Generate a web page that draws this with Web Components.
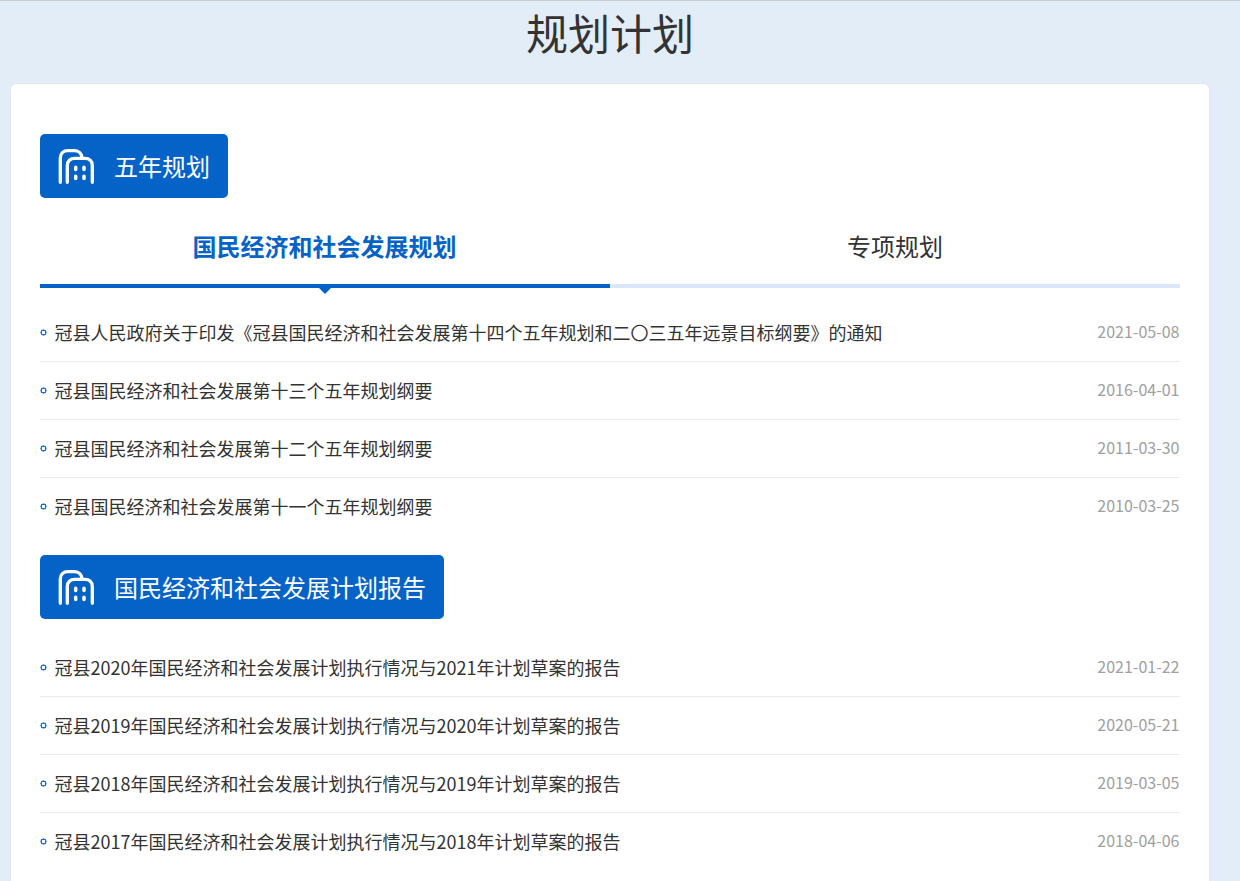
<!DOCTYPE html>
<html lang="zh">
<head>
<meta charset="utf-8">
<title>规划计划</title>
<style>
  html, body { margin: 0; padding: 0; }
  body {
    background: #e3edf8;
    border-top: 1px solid #c9ccd0;
    font-family: "Noto Sans CJK SC", "Noto Sans", sans-serif;
    color: #333;
    height: 880px;
    overflow: hidden;
  }
</style>
</head>
<body>
<plan-page>
  <plan-section title="五年规划">
    <plan-tabs first="国民经济和社会发展规划" second="专项规划"></plan-tabs>
    <plan-row date="2021-05-08">冠县人民政府关于印发《冠县国民经济和社会发展第十四个五年规划和二〇三五年远景目标纲要》的通知</plan-row>
    <plan-row date="2016-04-01">冠县国民经济和社会发展第十三个五年规划纲要</plan-row>
    <plan-row date="2011-03-30">冠县国民经济和社会发展第十二个五年规划纲要</plan-row>
    <plan-row date="2010-03-25" last>冠县国民经济和社会发展第十一个五年规划纲要</plan-row>
  </plan-section>
  <plan-section title="国民经济和社会发展计划报告">
    <plan-row date="2021-01-22">冠县2020年国民经济和社会发展计划执行情况与2021年计划草案的报告</plan-row>
    <plan-row date="2020-05-21">冠县2019年国民经济和社会发展计划执行情况与2020年计划草案的报告</plan-row>
    <plan-row date="2019-03-05">冠县2018年国民经济和社会发展计划执行情况与2019年计划草案的报告</plan-row>
    <plan-row date="2018-04-06" last>冠县2017年国民经济和社会发展计划执行情况与2018年计划草案的报告</plan-row>
  </plan-section>
</plan-page>
<script>
class PlanPage extends HTMLElement {
  constructor() {
    super();
    this.attachShadow({ mode: "open" });
    this.shadowRoot.innerHTML = `
      <style>
        :host { display: block; }
        h1 {
          margin: 0;
          width: 1220px;
          height: 82px;
          text-align: center;
          font-size: 42px;
          font-weight: 400;
          line-height: 62px;
          color: #333;
        }
        .card {
          margin: 0 30px 0 10px;
          padding: 50px 29px 0;
          background: #fff;
          border: 1px solid #dde6ef;
          border-bottom: 0;
          border-radius: 6px 6px 0 0;
          box-sizing: border-box;
          width: 1200px;
          min-height: 800px;
        }
      </style>
      <h1>规划计划</h1>
      <div class="card"><slot></slot></div>
    `;
  }
}
customElements.define("plan-page", PlanPage);

class PlanSection extends HTMLElement {
  constructor() {
    super();
    this.attachShadow({ mode: "open" });
    this.shadowRoot.innerHTML = `
      <style>
        :host { display: block; margin-bottom: 19px; }
        .head {
          display: inline-flex;
          align-items: center;
          height: 64px;
          padding: 0 18px 0 18px;
          background: #0563c8;
          color: #fff;
          border-radius: 5px;
          font-size: 24px;
          vertical-align: top;
        }
        svg { width: 36px; height: 36px; margin-right: 20px; flex: none; }
        .title { line-height: 36px; }
        .body { display: block; }
        .body.plain { margin-top: 20px; }
      </style>
      <div class="head">
        <svg viewBox="0 0 36 36" fill="none" stroke="#fff" stroke-width="3.300" stroke-linecap="round">
          <path d="M2.300 34.300V10C2.300 5.500 5.300 2.700 10 2.700H16C20.500 2.700 23.500 5.500 24 9.500"/>
          <path d="M9.300 34.300V17.500C9.300 13 12.300 10.300 16.800 10.300H27C31.300 10.300 34.300 13 34.300 17.500V34.300"/>
          <path d="M17.700 19.200V21.400M26 19.200V21.400M17.700 28.200V30.400M26 28.200V30.400" stroke-width="3.500"/>
        </svg>
        <span class="title"></span>
      </div>
      <div class="body"><slot></slot></div>
    `;
  }
  connectedCallback() {
    this.shadowRoot.querySelector(".title").textContent = this.getAttribute("title");
    if (!this.querySelector("plan-tabs")) {
      this.shadowRoot.querySelector(".body").classList.add("plain");
    }
  }
}
customElements.define("plan-section", PlanSection);

class PlanTabs extends HTMLElement {
  constructor() {
    super();
    this.attachShadow({ mode: "open" });
    this.shadowRoot.innerHTML = `
      <style>
        :host { display: grid; grid-template-columns: 1fr 1fr; margin-bottom: 16px; }
        .tab {
          position: relative;
          height: 90px;
          box-sizing: border-box;
          padding-top: 30px;
          text-align: center;
          font-size: 24px;
          line-height: 36px;
          color: #333;
          border-bottom: 4px solid #d9e7f8;
        }
        .tab.on { color: #0563c8; font-weight: 700; border-bottom-color: #0563c8; padding-right: 1px; }
        .tab.on::after {
          content: "";
          position: absolute;
          left: 50%;
          bottom: -10px;
          margin-left: -6px;
          border: 6px solid transparent;
          border-bottom: 0;
          border-top-color: #0563c8;
        }
      </style>
      <div class="tab on"></div>
      <div class="tab"></div>
    `;
  }
  connectedCallback() {
    const tabs = this.shadowRoot.querySelectorAll(".tab");
    tabs[0].textContent = this.getAttribute("first");
    tabs[1].textContent = this.getAttribute("second");
  }
}
customElements.define("plan-tabs", PlanTabs);

class PlanRow extends HTMLElement {
  constructor() {
    super();
    this.attachShadow({ mode: "open" });
    this.shadowRoot.innerHTML = `
      <style>
        :host {
          display: flex;
          align-items: center;
          height: 58px;
          box-sizing: border-box;
          border-bottom: 1px solid #e8ecef;
        }
        :host([last]) { border-bottom-color: transparent; }
        .dot {
          width: 7px;
          height: 7px;
          background: radial-gradient(circle, #fff 0 1.400px, #1a6fc8 1.800px 2.800px, transparent 3.300px);
          margin-right: 7.500px;
          flex: none;
        }
        .text { flex: 1; font-size: 18px; line-height: 28px; color: #333; white-space: nowrap; margin-top: -2px; }
        .date { font-size: 16px; line-height: 24px; color: #a0a0a0; margin: -3px 0.500px 0 0; }
      </style>
      <span class="dot"></span>
      <span class="text"><slot></slot></span>
      <span class="date"></span>
    `;
  }
  connectedCallback() {
    this.shadowRoot.querySelector(".date").textContent = this.getAttribute("date");
  }
}
customElements.define("plan-row", PlanRow);
</script>
</body>
</html>
